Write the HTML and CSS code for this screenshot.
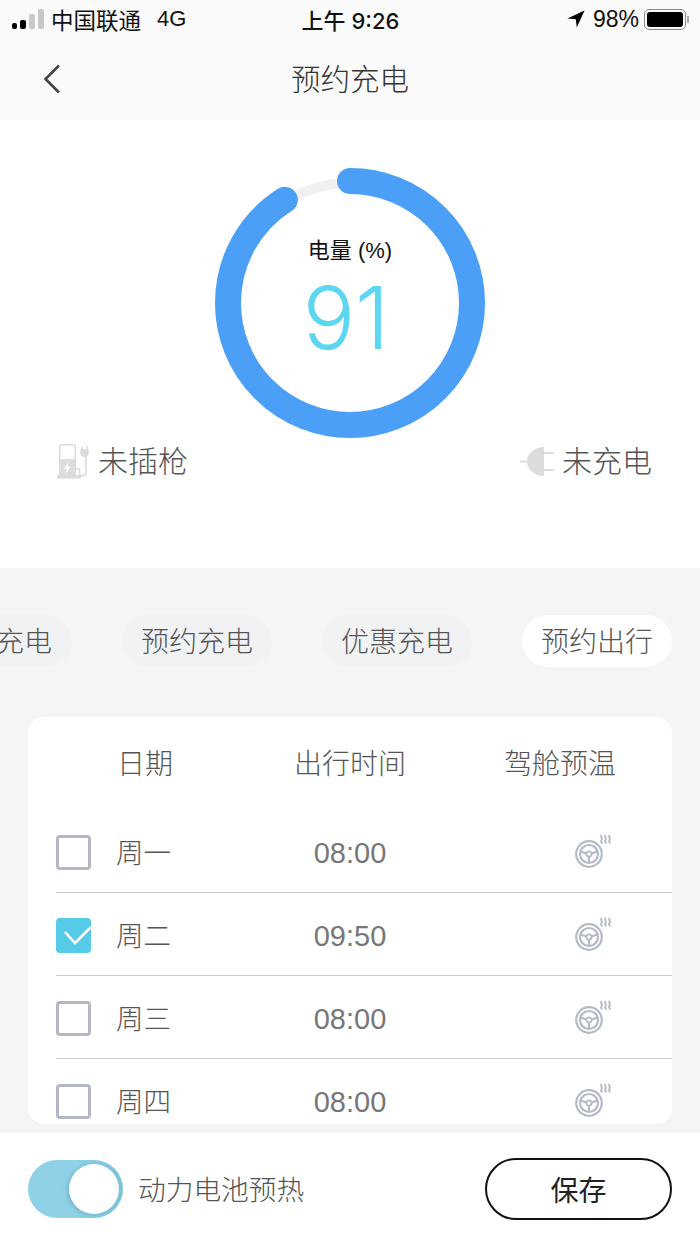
FILE: index.html
```html
<!DOCTYPE html>
<html lang="zh-CN">
<head>
  <meta charset="UTF-8" />
  <title>预约充电</title>
  <link rel="stylesheet" href="styles.css">
</head>
<body>
  <svg class="defs" width="0" height="0">
    <symbol id="wheel" viewBox="0 0 38 34">
      <circle cx="14" cy="20" r="12.8" fill="none" stroke="#b4bac6" stroke-width="2.2"/>
      <circle cx="14" cy="20" r="9" fill="none" stroke="#b4bac6" stroke-width="2.2"/>
      <circle cx="14" cy="20" r="2.6" fill="none" stroke="#b4bac6" stroke-width="1.8"/>
      <path d="M5.5 17.5L11.5 19.5M22.5 17.5L16.5 19.5M14 22.6V29" fill="none" stroke="#b4bac6" stroke-width="2.2"/>
      <path d="M26.5 1c-1.4 1.6 1.4 3.2 0 5s.6 2.6.6 3.4M30.5 1c-1.4 1.6 1.4 3.2 0 5s.6 2.6.6 3.4M34.5 1c-1.4 1.6 1.4 3.2 0 5s.6 2.6.6 3.4" fill="none" stroke="#b4bac6" stroke-width="2"/>
    </symbol>
  </svg>

  <div class="page">
    <div class="top">
      <div class="status">
        <div class="status-left">
          <div class="signal"><span class="b1"></span><span class="b2"></span><span class="b3"></span><span class="b4"></span></div>
          <span class="carrier">中国联通</span>
          <span class="net">4G</span>
        </div>
        <div class="clock">上午 9:26</div>
        <div class="status-right">
          <svg width="18" height="18" viewBox="0 0 18 18"><path d="M17.5 0.5L0.5 8.5L8.8 9.2L9.8 17.5z" fill="#000"/></svg>
          <span class="pct">98%</span>
          <div class="battery"><div class="level"></div></div>
          <div class="nub"></div>
        </div>
      </div>
      <div class="nav">
        <svg class="back" width="18" height="30" viewBox="0 0 18 30"><path d="M16 1.5L2.5 15L16 28.5" fill="none" stroke="#444" stroke-width="2.6"/></svg>
        <div class="title">预约充电</div>
      </div>
    </div>

    <div class="hero">
      <div class="ring">
        <svg width="270" height="270" viewBox="0 0 270 270">
          <circle class="track" cx="135" cy="135" r="120"/>
          <circle class="bar" cx="135" cy="135" r="122" stroke-dasharray="697.6 800" transform="rotate(-90 135 135)"/>
        </svg>
        <div class="ring-text">
          <div class="ring-label">电量 (%)</div>
          <div class="ring-value">91</div>
        </div>
      </div>
      <div class="state-row">
        <div class="state">
          <svg width="32" height="37" viewBox="0 0 32 37">
            <rect x="2.8" y="1.8" width="15.4" height="31" rx="2" fill="none" stroke="#dcdcdc" stroke-width="1.6"/>
            <rect x="2" y="16" width="17" height="17" fill="#dcdcdc"/>
            <path d="M11.5 18.5L7 26h3l-1 5 4.5-7.5h-3z" fill="#fff"/>
            <rect x="0" y="32" width="24" height="3.5" fill="#dcdcdc"/>
            <path d="M19 26h3.5v3.5a3.2 3.2 0 0 0 6.4 0V12" fill="none" stroke="#dcdcdc" stroke-width="1.6"/>
            <path d="M25 3v4M30 3v4M24 7h7v3a3 3 0 0 1-7 0z" fill="#dcdcdc" stroke="#dcdcdc" stroke-width="1.4"/>
          </svg>
          <span class="state-text">未插枪</span>
        </div>
        <div class="state plug">
          <svg width="34" height="31" viewBox="0 0 34 31">
            <path d="M24 1v29C14 30 7 23 7 15.5S14 1 24 1z" fill="#dcdcdc"/>
            <path d="M0 15.5h8M24 7h10M24 24h10" fill="none" stroke="#dcdcdc" stroke-width="2"/>
          </svg>
          <span class="state-text">未充电</span>
        </div>
      </div>
    </div>

    <div class="main">
      <div class="tabs">
        <div class="tab cut">充电</div>
        <div class="tab">预约充电</div>
        <div class="tab">优惠充电</div>
        <div class="tab active">预约出行</div>
      </div>

      <div class="card">
        <div class="card-head">
          <div class="h-day">日期</div>
          <div class="h-time">出行时间</div>
          <div class="h-heat">驾舱预温</div>
        </div>
        <div class="row">
          <div class="check"></div>
          <div class="day">周一</div>
          <div class="time">08:00</div>
          <svg class="heat" width="38" height="34"><use href="#wheel"/></svg>
        </div>
        <div class="row">
          <div class="check on">
            <svg width="35" height="35" viewBox="0 0 35 35"><path d="M9 14L19 25L35 9" fill="none" stroke="#fff" stroke-width="2.6"/></svg>
          </div>
          <div class="day">周二</div>
          <div class="time">09:50</div>
          <svg class="heat" width="38" height="34"><use href="#wheel"/></svg>
        </div>
        <div class="row">
          <div class="check"></div>
          <div class="day">周三</div>
          <div class="time">08:00</div>
          <svg class="heat" width="38" height="34"><use href="#wheel"/></svg>
        </div>
        <div class="row">
          <div class="check"></div>
          <div class="day">周四</div>
          <div class="time">08:00</div>
          <svg class="heat" width="38" height="34"><use href="#wheel"/></svg>
        </div>
      </div>
    </div>

    <div class="footer">
      <div class="switch"><div class="knob"></div></div>
      <div class="switch-label">动力电池预热</div>
      <button class="save">保存</button>
    </div>
  </div>
</body>
</html>
```

FILE: styles.css
```css
* {
  box-sizing: border-box;
}

body {
  margin: 0;
  font-family: "Liberation Sans", "Noto Sans CJK SC", sans-serif;
  color: #666;
  background: #fff;
}

.defs {
  display: block;
  height: 0;
}

.page {
  width: 700px;
  height: 1245px;
  overflow: hidden;
  display: flex;
  flex-direction: column;
}

/* top bars */
.top {
  height: 120px;
  background: #fafafa;
}

.status {
  height: 38px;
  padding: 0 11px 0 12px;
  display: grid;
  grid-template-columns: 1fr auto 1fr;
  align-items: center;
  font-size: 21px;
  color: #111;
}

.status-left {
  display: flex;
  align-items: center;
  gap: 8px;
}

.carrier {
  font-size: 22.5px;
}

.net {
  margin-left: 8px;
  font-size: 22px;
}

.signal {
  display: flex;
  align-items: flex-end;
  gap: 3px;
  height: 20px;
  margin-right: -1px;
}

.signal span {
  width: 5px;
  border-radius: 2px;
  background: #000;
}

.signal .b1 {
  height: 6px;
}

.signal .b2 {
  height: 9px;
  width: 6px;
}

.signal .b3 {
  height: 15px;
  width: 6px;
  background: #c8c8c8;
}

.signal .b4 {
  height: 20px;
  width: 6px;
  background: #c8c8c8;
}

.clock {
  font-family: Inter, "Noto Sans CJK SC", sans-serif;
  font-size: 22px;
  font-weight: 500;
}

.status-right {
  display: flex;
  align-items: center;
  justify-content: flex-end;
}

.pct {
  margin-left: 8px;
  font-size: 23px;
}

.battery {
  width: 42px;
  height: 21px;
  margin-left: 5px;
  padding: 2px;
  border: 1.5px solid #8a8a8a;
  border-radius: 5px;
}

.level {
  height: 100%;
  background: #000;
  border-radius: 3px;
}

.nub {
  width: 2px;
  height: 7px;
  margin-left: 1px;
  background: #aaa;
}

.nav {
  height: 82px;
  padding-bottom: 4px;
  display: flex;
  align-items: center;
  justify-content: center;
  position: relative;
}

.back {
  position: absolute;
  left: 43px;
  top: 26px;
}

.title {
  font-size: 29.5px;
  color: #333;
  font-weight: 300;
}

/* battery ring */
.hero {
  height: 448px;
  padding-top: 48px;
  background: #fff;
}

.ring {
  width: 270px;
  height: 270px;
  margin: 0 auto;
  position: relative;
}

.ring svg {
  display: block;
}

.track {
  fill: none;
  stroke: #f0f0f0;
  stroke-width: 10;
}

.bar {
  fill: none;
  stroke: #4c9ff6;
  stroke-width: 26;
  stroke-linecap: round;
}

.ring-text {
  position: absolute;
  inset: 0;
  display: flex;
  flex-direction: column;
  align-items: center;
  padding-top: 68px;
}

.ring-label {
  font-size: 22px;
  line-height: 30px;
  color: #111;
}

.ring-value {
  margin: 2px 8px 0 0;
  font-family: Inter, sans-serif;
  font-weight: 350;
  font-size: 87px;
  line-height: 100px;
  color: #5dd6f2;
}

.state-row {
  margin-top: 5px;
  padding: 0 48px 0 57px;
  display: flex;
  justify-content: space-between;
}

.state {
  display: flex;
  align-items: center;
  gap: 9px;
  height: 36px;
  font-size: 30px;
  color: #555;
}

.state-text {
  padding-bottom: 4px;
  font-weight: 300;
}

.state.plug {
  gap: 8px;
}

/* tabs and table */
.main {
  height: 565px;
  padding-top: 47px;
  background: #f4f5f7;
}

.tabs {
  display: flex;
  gap: 50px;
  margin-left: -78px;
}

.tab {
  flex: none;
  width: 150px;
  height: 52px;
  padding-top: 2px;
  line-height: 52px;
  border-radius: 26px;
  text-align: center;
  font-size: 28px;
  font-weight: 300;
  color: #555;
  background: #f1f2f4;
}

.tab.cut {
  padding-right: 20px;
  text-align: right;
}

.tab.active {
  background: #fff;
}

.card {
  height: 407px;
  margin: 50px 28px 0;
  overflow: hidden;
  border-radius: 16px;
  background: #fff;
}

.card-head {
  height: 93px;
  padding-bottom: 3px;
  display: flex;
  align-items: center;
  font-size: 28px;
  font-weight: 300;
  color: #555;
}

.h-day {
  width: 234px;
  text-align: center;
}

.h-time {
  width: 176px;
  text-align: center;
}

.h-heat {
  padding-left: 66px;
}

.row {
  height: 83px;
  margin-left: 28px;
  display: flex;
  align-items: center;
  border-bottom: 1px solid #ccc;
  font-size: 27.5px;
  font-weight: 300;
  color: #555;
}

.check {
  width: 35px;
  height: 35px;
  margin-top: 2px;
  border: 3px solid #b3b8c4;
  border-radius: 4px;
}

.check.on {
  border: 0;
  background: #55cbe8;
  overflow: hidden;
}

.check svg {
  display: block;
}

.day {
  width: 100px;
  margin-left: 25px;
}

.time {
  width: 268px;
  padding-top: 4px;
  text-align: center;
  font-size: 29px;
  color: #777;
}

.heat {
  margin-left: 91px;
}

/* bottom bar */
.footer {
  flex: 1;
  padding: 0 28px;
  display: flex;
  align-items: center;
  background: #fff;
}

.switch {
  width: 95px;
  height: 58px;
  padding: 4px;
  display: flex;
  justify-content: flex-end;
  border-radius: 29px;
  background: linear-gradient(90deg, #8fd2e8 50%, #7cc4d9);
}

.knob {
  width: 50px;
  height: 50px;
  border-radius: 50%;
  background: #fff;
  box-shadow: -2px 1px 4px rgba(60, 120, 140, 0.3);
}

.switch-label {
  margin-left: 15px;
  padding-bottom: 2px;
  font-size: 27.7px;
  font-weight: 300;
  color: #555;
}

.save {
  width: 187px;
  height: 62px;
  margin-left: auto;
  border: 2px solid #111;
  border-radius: 31px;
  background: #fff;
  font-family: inherit;
  font-size: 28px;
  color: #222;
}
```
